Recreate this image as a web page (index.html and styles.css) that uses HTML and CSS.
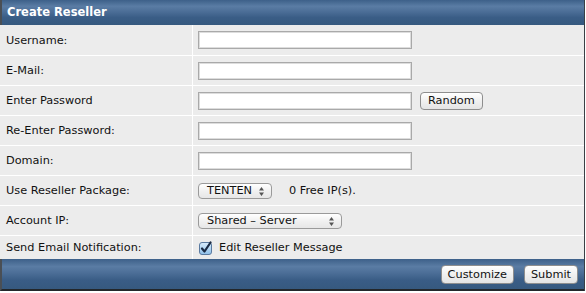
FILE: index.html
```html
<!DOCTYPE html>
<html>
<head>
<meta charset="utf-8">
<link rel="stylesheet" href="styles.css">
</head>
<body>
<div class="panel">
  <div class="bar head">Create Reseller</div>
  <table class="form">
    <tr class="first"><td class="lbl">Username:</td><td class="val"><span class="inp"></span></td></tr>
    <tr><td class="lbl">E-Mail:</td><td class="val"><span class="inp"></span></td></tr>
    <tr><td class="lbl">Enter Password</td><td class="val"><span class="inp"></span><span class="btn rand">Random</span></td></tr>
    <tr><td class="lbl">Re-Enter Password:</td><td class="val"><span class="inp"></span></td></tr>
    <tr><td class="lbl">Domain:</td><td class="val"><span class="inp"></span></td></tr>
    <tr><td class="lbl">Use Reseller Package:</td><td class="val"><span class="sel sel-pkg">TENTEN<svg class="arr" width="5" height="9" viewBox="0 0 5 9"><path d="M2.5 0 L5 3.5 L0 3.5 Z M0 5.5 L5 5.5 L2.5 9 Z" fill="#555"/></svg></span><span class="free">0 Free IP(s).</span></td></tr>
    <tr><td class="lbl">Account IP:</td><td class="val"><span class="sel sel-ip">Shared &ndash; Server<svg class="arr" width="5" height="9" viewBox="0 0 5 9"><path d="M2.5 0 L5 3.5 L0 3.5 Z M0 5.5 L5 5.5 L2.5 9 Z" fill="#555"/></svg></span></td></tr>
    <tr class="last"><td class="lbl">Send Email Notification:</td><td class="val"><span class="chk"><svg width="14" height="14" viewBox="0 0 14 14"><defs><linearGradient id="g" x1="0" y1="0" x2="0" y2="1"><stop offset="0" stop-color="#d9ecfb"/><stop offset="1" stop-color="#8fc0ea"/></linearGradient></defs><rect x="0.5" y="1.5" width="12" height="12" rx="2.5" fill="url(#g)" stroke="#5a7aa0"/><path d="M3 7.5 L5.5 10.5 L11.5 1.5" fill="none" stroke="#1a2a44" stroke-width="2.2" stroke-linecap="round" stroke-linejoin="round"/></svg></span><span class="chk-txt">Edit Reseller Message</span></td></tr>
  </table>
  <div class="bar foot"><span class="btn">Customize</span><span class="btn">Submit</span></div>
</div>
</body>
</html>
```
FILE: styles.css
```css
html, body { margin: 0; padding: 0; background: #fff; }
body { font-family: "DejaVu Sans", Verdana, sans-serif; font-size: 11.3px; color: #111; }
.panel { width: 584px; background: #ececec; border-right: 1px solid #3a3f45; }
.bar {
  background: linear-gradient(to bottom, #3d6089 0%, #5a7ca4 25%, #4d6f98 45%, #3a5d86 70%, #36597f 100%);
  border-left: 2px solid #4a4f55;
}
.head { height: 25px; line-height: 24px; color: #fff; font-weight: bold; font-size: 11.5px; padding-left: 5px; box-sizing: border-box; }
.form { width: 100%; border-collapse: collapse; }
.form td { height: 29px; border-bottom: 1px solid #fff; padding: 0; vertical-align: middle; }
.form tr.first td { height: 30px; }
.form tr.last td { height: 23px; border-bottom: 0; }
.lbl { width: 186px; padding-left: 6px !important; border-right: 1px solid #fff; }
.val { padding-left: 5px !important; }
.val > span { vertical-align: middle; }
.inp { display: inline-block; width: 212px; height: 16px; background: #fff; border: 1px solid #a9a9a9; box-shadow: inset 0 0 0 1px #ddd; }
.btn {
  display: inline-block; height: 16px; line-height: 16px; padding: 0 7px;
  border: 1px solid #8e8e8e; border-radius: 4px;
  background: linear-gradient(to bottom, #ffffff, #f0f0f0 50%, #e4e4e4);
  font-size: 11.3px; color: #111;
}
.rand { margin-left: 8px; }
.sel {
  display: inline-block; box-sizing: border-box; height: 16px; line-height: 14px; padding-left: 8px;
  border: 1px solid #9a9a9a; border-radius: 4px; position: relative;
  background: linear-gradient(to bottom, #ffffff, #f1f1f1 50%, #e6e6e6);
}
.sel-pkg { width: 74px; }
.sel-ip { width: 144px; }
.arr { position: absolute; right: 7px; top: 3px; }
.free { margin-left: 17px; }
.chk { display: inline-block; width: 14px; height: 14px; margin-left: 1px; }
.chk-txt { margin-left: 6px; }
.foot { height: 30px; display: flex; justify-content: flex-end; align-items: center; gap: 10px; padding-right: 6px; border-bottom: 2px solid #23272b; }
.foot .btn { height: 17px; line-height: 17px; padding: 0 6px; }
```
